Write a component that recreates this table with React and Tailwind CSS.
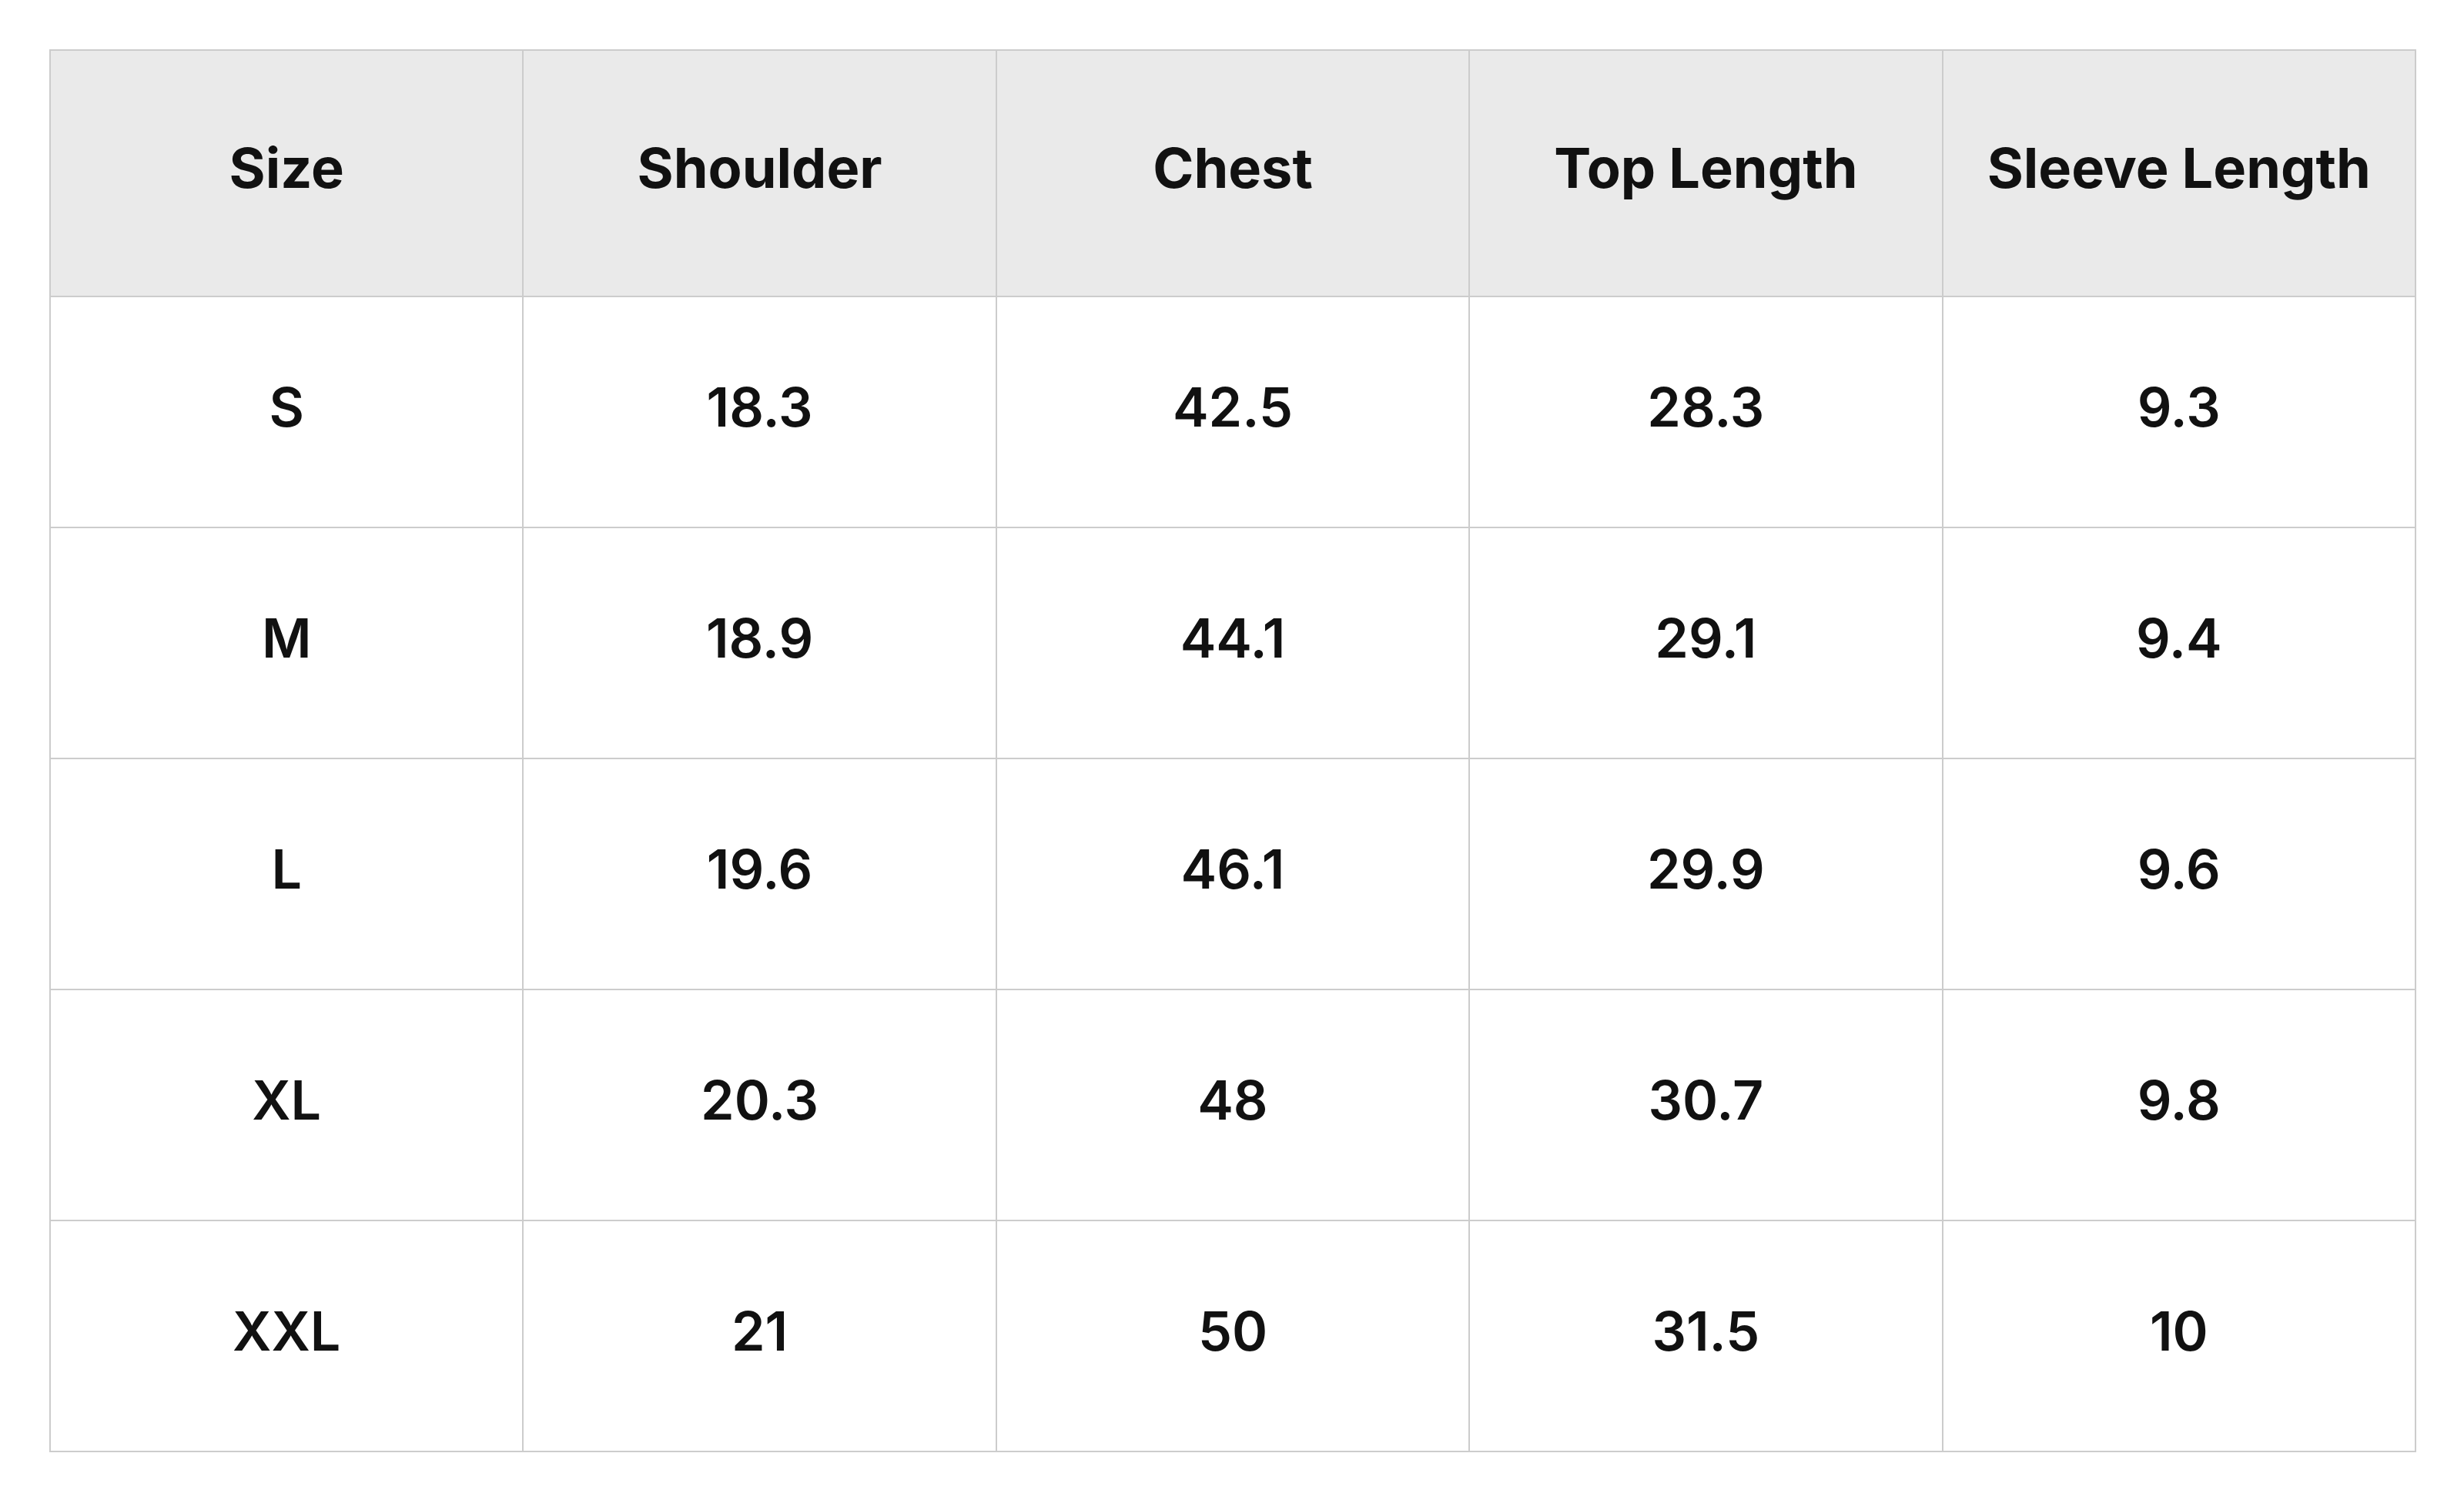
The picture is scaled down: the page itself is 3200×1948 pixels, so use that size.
const headers = ['Size', 'Shoulder', 'Chest', 'Top Length', 'Sleeve Length'];

const rows = [
  ['S', '18.3', '42.5', '28.3', '9.3'],
  ['M', '18.9', '44.1', '29.1', '9.4'],
  ['L', '19.6', '46.1', '29.9', '9.6'],
  ['XL', '20.3', '48', '30.7', '9.8'],
  ['XXL', '21', '50', '31.5', '10'],
];

export default function App() {
  return (
    <div
      className="min-h-[1948px] w-[3200px] bg-white pt-[64px] pl-[64px] text-[#111111]"
      style={{ fontFamily: 'Inter, "Noto Sans", sans-serif' }}
    >
      <table className="w-[3074px] table-fixed border-collapse">
        <thead>
          <tr className="h-[320px] bg-[#eaeaea]">
            {headers.map((h) => (
              <th
                key={h}
                className="border-2 border-[#cccccc] pb-[14px] text-center align-middle text-[72px] font-bold"
              >
                {h}
              </th>
            ))}
          </tr>
        </thead>
        <tbody>
          {rows.map((row) => (
            <tr key={row[0]} className="h-[300px]">
              {row.map((cell, i) => (
                <td
                  key={i}
                  className="border-2 border-[#cccccc] pb-[14px] text-center align-middle text-[70px] font-semibold"
                >
                  {cell}
                </td>
              ))}
            </tr>
          ))}
        </tbody>
      </table>
    </div>
  );
}
